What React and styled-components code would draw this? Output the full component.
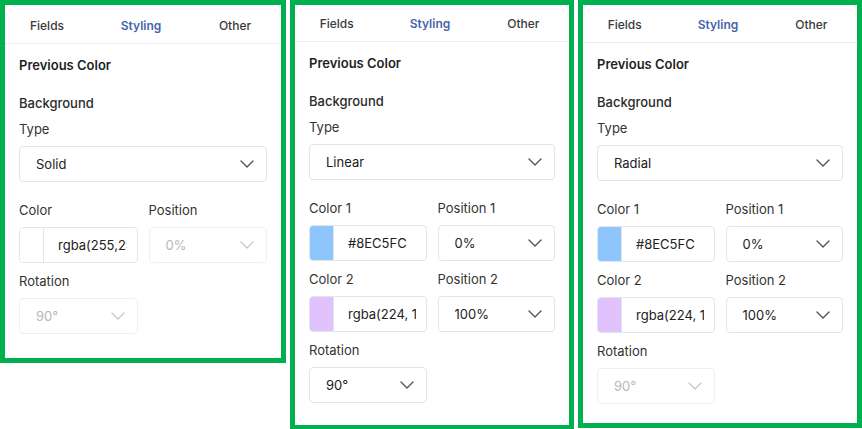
import styled, { createGlobalStyle } from "styled-components";
import { ChevronDown } from "lucide-react";

const GlobalStyle = createGlobalStyle`
  * { box-sizing: border-box; }
  body {
    margin: 0;
    background: #ffffff;
    font-family: Inter, "Noto Sans", sans-serif;
    color: #222;
  }
`;

const Page = styled.div`
  display: flex;
  align-items: flex-start;
  gap: 4px;
  width: 862px;
`;

const Card = styled.div`
  width: ${(p) => p.$w}px;
  flex: none;
  background: #fff;
  border: 5px solid #00b04f;
  padding-top: ${(p) => p.$shift}px;
  padding-bottom: ${(p) => p.$bottom}px;
`;

const TabsBar = styled.div`
  height: 37px;
  border-bottom: 1px solid #e8ebf1;
`;

const TabList = styled.div`
  display: grid;
  grid-template-columns: repeat(3, 1fr);
  height: 36px;
  margin: 0 -1px 0 -5px;
`;

const Tab = styled.div`
  display: flex;
  align-items: center;
  justify-content: center;
  font-size: 12px;
  font-weight: ${(p) => (p.$active ? 600 : 500)};
  color: ${(p) => (p.$active ? "#4565ad" : "#3a3a3a")};
`;

const Body = styled.div`
  padding: 12px 14px 0;
  display: flex;
  flex-direction: column;
`;

const Title = styled.div`
  font-size: 13px;
  line-height: 18px;
  font-weight: 600;
  color: #1f1f1f;
  margin-bottom: 20px;
`;

const Section = styled.div`
  font-size: 13px;
  line-height: 18px;
  font-weight: 500;
  color: #2b2b2b;
  margin-bottom: 8px;
`;

const Field = styled.div`
  display: flex;
  flex-direction: column;
  gap: 8px;
  min-width: 0;
`;

const Label = styled.div`
  font-size: 13px;
  line-height: 18px;
  color: #333;
`;

const Grid = styled.div`
  display: grid;
  grid-template-columns: 1fr 1fr;
  column-gap: 11px;
  row-gap: 9px;
  margin-top: 19px;
`;

const SelectBox = styled.div`
  height: 36px;
  display: flex;
  align-items: center;
  justify-content: space-between;
  padding: 0 7px 0 16px;
  border: 1px solid ${(p) => (p.$disabled ? "#eef0f4" : "#e2e5eb")};
  border-radius: 4px;
  font-size: 13px;
  color: ${(p) => (p.$disabled ? "#b8b8b8" : "#222")};
  svg {
    color: ${(p) => (p.$disabled ? "#c9c9c9" : "#555")};
  }
`;

const ColorBox = styled.div`
  height: 36px;
  display: flex;
  border: 1px solid #e2e5eb;
  border-radius: 4px;
  overflow: hidden;
`;

const Swatch = styled.div`
  width: 24px;
  flex: none;
  background: ${(p) => p.$color};
  border-right: 1px solid #e2e5eb;
`;

const ColorInput = styled.input`
  flex: 1;
  min-width: 0;
  border: none;
  outline: none;
  background: transparent;
  padding: 0 10px 0 14px;
  font-family: inherit;
  font-size: 13px;
  color: #222;
`;

const Select = ({ value, disabled }) => (
  <SelectBox $disabled={disabled}>
    <span>{value}</span>
    <ChevronDown size={24} strokeWidth={1.4} />
  </SelectBox>
);

const ColorField = ({ label, color, value }) => (
  <Field>
    <Label>{label}</Label>
    <ColorBox>
      <Swatch $color={color} />
      <ColorInput readOnly value={value} />
    </ColorBox>
  </Field>
);

const SelectField = ({ label, value, disabled }) => (
  <Field>
    <Label>{label}</Label>
    <Select value={value} disabled={disabled} />
  </Field>
);

const Panel = ({ w, shift, bottom, type, children }) => (
  <Card $w={w} $shift={shift} $bottom={bottom}>
    <TabsBar>
      <TabList>
        <Tab>Fields</Tab>
        <Tab $active>Styling</Tab>
        <Tab>Other</Tab>
      </TabList>
    </TabsBar>
    <Body>
      <Title>Previous Color</Title>
      <Section>Background</Section>
      <SelectField label="Type" value={type} />
      <Grid>{children}</Grid>
    </Body>
  </Card>
);

export default function App() {
  return (
    <>
      <GlobalStyle />
      <Page>
        <Panel w={286} shift={2} bottom={24} type="Solid">
          <ColorField label="Color" color="#ffffff" value="rgba(255,255,255,1)" />
          <SelectField label="Position" value="0%" disabled />
          <SelectField label="Rotation" value="90°" disabled />
        </Panel>
        <Panel w={284} shift={0} bottom={22} type="Linear">
          <ColorField label="Color 1" color="#8EC5FC" value="#8EC5FC" />
          <SelectField label="Position 1" value="0%" />
          <ColorField label="Color 2" color="#E0C3FC" value="rgba(224, 195, 252, 1)" />
          <SelectField label="Position 2" value="100%" />
          <SelectField label="Rotation" value="90°" />
        </Panel>
        <Panel w={284} shift={1} bottom={19} type="Radial">
          <ColorField label="Color 1" color="#8EC5FC" value="#8EC5FC" />
          <SelectField label="Position 1" value="0%" />
          <ColorField label="Color 2" color="#E0C3FC" value="rgba(224, 195, 252, 1)" />
          <SelectField label="Position 2" value="100%" />
          <SelectField label="Rotation" value="90°" disabled />
        </Panel>
      </Page>
    </>
  );
}
